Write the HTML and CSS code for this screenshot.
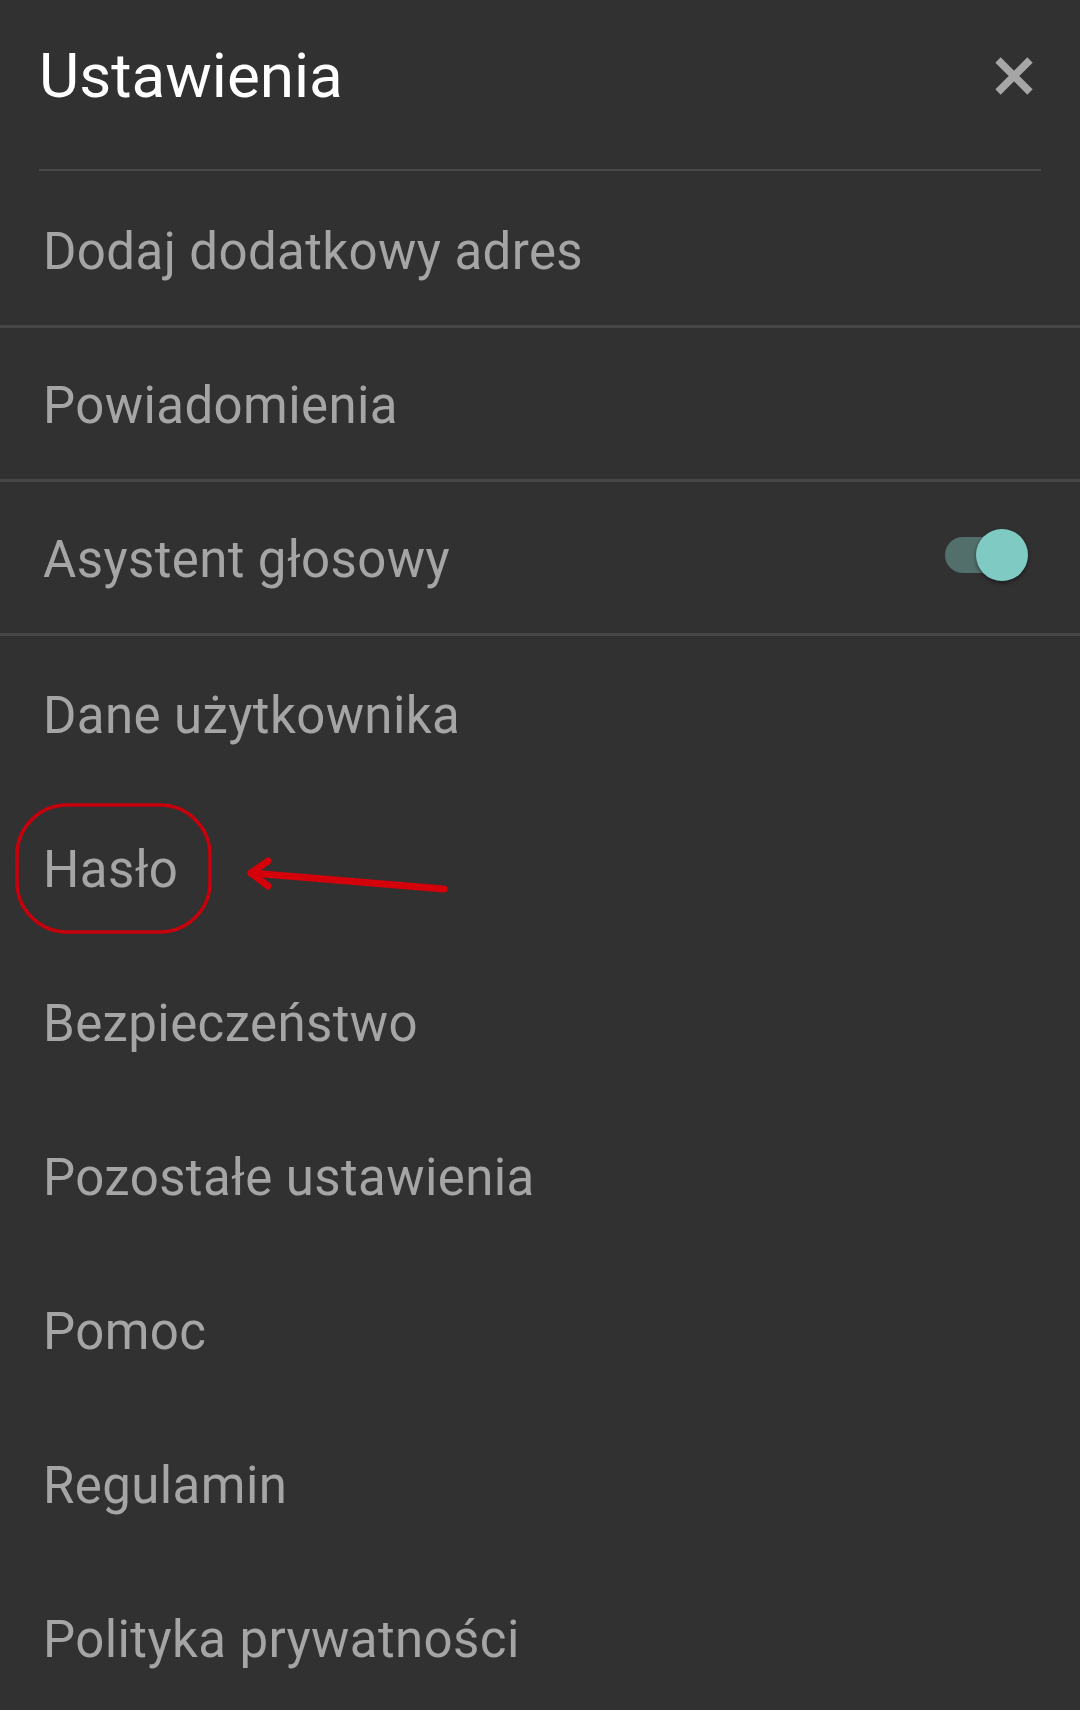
FILE: index.html
```html
<!DOCTYPE html>
<html lang="pl">
<head>
  <meta charset="UTF-8">
  <meta name="viewport" content="width=device-width, initial-scale=1.0">
  <title>Ustawienia</title>
  <link rel="stylesheet" href="styles.css">
</head>
<body>
  <div class="settings">
    <div class="header">
      <h1 class="title">Ustawienia</h1>
      <button class="close" aria-label="Zamknij">
        <svg width="40" height="40" viewBox="0 0 40 40">
          <path d="M4 4 L36 36 M36 4 L4 36" stroke="#a6a6a6" stroke-width="7.5" stroke-linecap="butt" fill="none"/>
        </svg>
      </button>
    </div>

    <ul class="menu">
      <li class="item divided">Dodaj dodatkowy adres</li>
      <li class="item divided">Powiadomienia</li>
      <li class="item divided">
        <span>Asystent głosowy</span>
        <span class="switch on"><span class="thumb"></span></span>
      </li>
      <li class="item">Dane użytkownika</li>
      <li class="item marked">
        <span>Hasło</span>
        <!-- annotation drawn over the row -->
        <svg class="mark" width="480" height="154" viewBox="0 0 480 154">
          <rect x="17" y="15" width="193" height="127" rx="50" ry="50" fill="none" stroke="#c8000c" stroke-width="3.5"/>
          <path d="M444 99 L251 83" stroke="#d4000a" stroke-width="7" stroke-linecap="round" fill="none"/>
          <path d="M268 71 L251 83 L268 96" stroke="#d4000a" stroke-width="7" stroke-linecap="round" stroke-linejoin="round" fill="none"/>
        </svg>
      </li>
      <li class="item">Bezpieczeństwo</li>
      <li class="item">Pozostałe ustawienia</li>
      <li class="item">Pomoc</li>
      <li class="item">Regulamin</li>
      <li class="item">Polityka prywatności</li>
    </ul>
  </div>
</body>
</html>
```

FILE: styles.css
```css
html, body {
  margin: 0;
  padding: 0;
  background: #313131;
}
body {
  font-family: Roboto, "Noto Sans", Arial, sans-serif;
  height: 1710px;
  overflow: hidden;
}
.header {
  display: flex;
  align-items: center;
  justify-content: space-between;
  margin: 0 39px 3px 39px;
  height: 171px;
  box-sizing: border-box;
  padding-bottom: 17px;
  border-bottom: 2px solid #4a4a4a;
}
.title {
  margin: 0;
  font-size: 62px;
  font-weight: 400;
  color: #ffffff;
  line-height: 72px;
}
.close {
  background: none;
  border: none;
  padding: 0;
  margin-right: 7px;
  width: 40px;
  height: 40px;
}
.menu {
  list-style: none;
  margin: 0;
  padding: 0;
}
.item {
  position: relative;
  display: flex;
  align-items: center;
  justify-content: space-between;
  height: 154px;
  box-sizing: border-box;
  padding: 4px 0 0 43px;
  font-size: 51px;
  letter-spacing: 0.4px;
  color: #a5a5a5;
}
.divided {
  border-bottom: 3px solid #474747;
}
.switch {
  position: relative;
  width: 74px;
  height: 36px;
  margin: 0 61px 10px 0;
  border-radius: 18px;
  background: #526f6c;
}
.thumb {
  position: absolute;
  right: -9px;
  top: -8px;
  width: 52px;
  height: 52px;
  border-radius: 50%;
  background: #7fcbc3;
  box-shadow: 0 2px 4px rgba(0,0,0,0.45);
}
.mark {
  position: absolute;
  left: 0;
  top: 0;
}
```
